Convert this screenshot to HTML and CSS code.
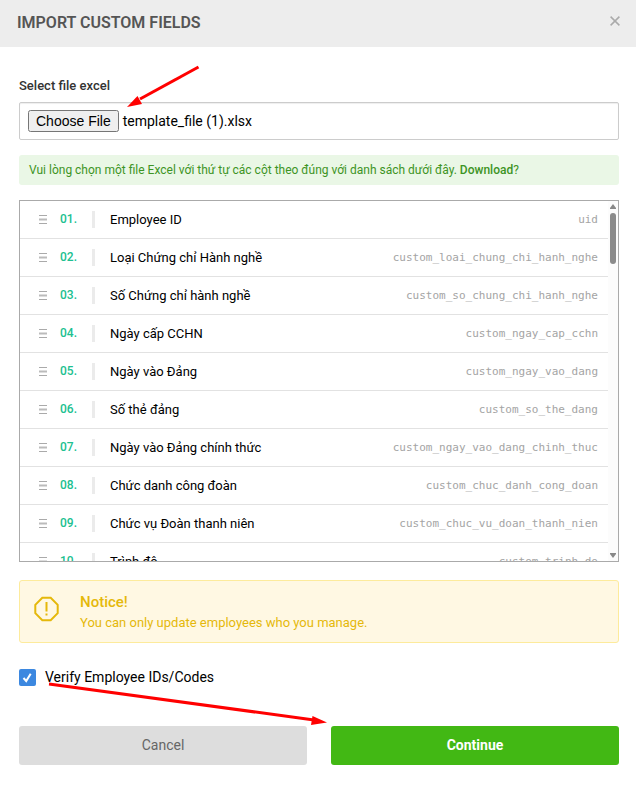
FILE: index.html
```html
<!DOCTYPE html>
<html lang="en">
<head>
<meta charset="utf-8">
<title>Import custom fields</title>
<link rel="stylesheet" href="styles.css">
</head>
<body>
<main class="dialog">
  <header class="dialog-header">
    <h1>IMPORT CUSTOM FIELDS</h1>
    <button class="close" type="button" aria-label="Close">
      <svg width="10" height="10" viewBox="0 0 10 10"><path d="M.6.6l8.8 8.8M9.4.6L.6 9.4"/></svg>
    </button>
  </header>
  <form class="dialog-body">
    <label class="field-label" for="excel">Select file excel</label>
    <div class="file-box">
      <input type="file" id="excel">
      <svg class="arrow arrow-file" width="76" height="46" viewBox="0 0 76 46"><path class="shaft" d="M72.500 5L14 37"/><path class="head" d="M1 45L11.500 34L16 42Z"/></svg>
    </div>
    <p class="hint">Vui lòng chọn một file Excel với thứ tự các cột theo đúng với danh sách dưới đây. <a href="#download">Download</a>?</p>
    <div class="list-frame">
      <ol class="fields" id="fields"></ol>
      <div class="scrollbar" aria-hidden="true">
        <svg width="6" height="5" viewBox="0 0 6 5"><path d="M3 0L6 4V5H0V4Z"/></svg>
        <span class="thumb"></span>
        <svg width="6" height="5" viewBox="0 0 6 5"><path d="M3 5L6 1V0H0V1Z"/></svg>
      </div>
    </div>
    <section class="notice">
      <svg width="26" height="26" viewBox="0 0 26 26"><path d="M8.300 1.800h8.400L23.700 8.800v8.400L16.700 24.200h-8.400L1.300 17.200v-8.400zM12.500 6v9.500M12.500 17.500v2"/></svg>
      <div>
        <h2>Notice!</h2>
        <p>You can only update employees who you manage.</p>
      </div>
    </section>
    <div class="verify">
      <span class="tick">
        <input type="checkbox" id="verify" checked>
        <svg viewBox="0 0 17 17"><path d="M4.500 9l2.700 3L11.700 4.700"/></svg>
      </span>
      <label for="verify">Verify Employee IDs/Codes</label>
      <svg class="arrow arrow-continue" width="284" height="46" viewBox="0 0 284 46"><path class="shaft" d="M3 3L268 39"/><path class="head" d="M281 41.500L265 44L266.500 35Z"/></svg>
    </div>
    <div class="actions">
      <button class="cancel" type="button">Cancel</button>
      <button class="continue" type="submit">Continue</button>
    </div>
  </form>
</main>
<script src="script.js"></script>
</body>
</html>
```
FILE: styles.css
```css
* { box-sizing: border-box; }
body {
  margin: 0;
  background: #fff;
  color: #000;
  font: 13px/20px Roboto, "Noto Sans", sans-serif;
}
h1, h2, p, ol { margin: 0; padding: 0; }
.dialog-header {
  display: flex;
  align-items: center;
  justify-content: space-between;
  height: 47px;
  padding: 0 16px 2px 17px;
  background: #ededed;
}
h1 { color: #555; font-size: 16px; font-weight: 600; }
.close { display: flex; margin-bottom: 3px; padding: 0; border: 0; background: none; }
.close path { fill: none; stroke: #aaa; stroke-width: 1.5; }
.dialog-body { padding: 29px 17px 27px 19px; }
.field-label {
  display: block;
  margin-bottom: 6px;
  color: #333;
  font-weight: 500;
}
.file-box {
  position: relative;
  height: 38px;
  padding: 7px 8px;
  border: 1px solid #ccc;
  border-radius: 2px;
  box-shadow: inset 0 1px 1px #eee;
}
.file-box input { display: block; width: 100%; font: 14px/20px Roboto, sans-serif; }
.file-box input::file-selector-button { font: 14px/16px "Liberation Sans", Arial, sans-serif; }
.arrow { position: absolute; pointer-events: none; }
.arrow .shaft { fill: none; stroke: red; stroke-width: 3; }
.arrow .head { fill: red; }
.arrow-file { left: 106px; top: -41px; }
.hint {
  margin-top: 15px;
  padding: 5px 10px;
  border-radius: 3px;
  background: #eaf7e6;
  color: #3d9424;
  font-size: 12px;
}
.hint a { color: inherit; font-weight: 500; text-decoration: none; }
.list-frame {
  display: flex;
  height: 362px;
  margin-top: 15px;
  border: 1px solid #aaa;
}
.fields {
  flex: 1;
  overflow-y: auto;
  scrollbar-width: none;
  list-style: none;
}
.fields li {
  display: flex;
  align-items: center;
  height: 38px;
  padding: 0 10px 0 19px;
  border-bottom: 1px solid #e2e2e2;
}
.grip { width: 21px; height: 9px; }
.grip path { fill: none; stroke: #aaa; }
.grip .middle { stroke: #bbb; stroke-width: 2; }
.number {
  width: 32px;
  padding-bottom: 2px;
  color: #20bf90;
  font-size: 12px;
  font-weight: 500;
}
.divider { width: 3px; height: 17px; margin-right: 15px; background: #ebebeb; }
.name { flex: 1; }
.fields code { color: #a4a4a4; font: 11px/20px "DejaVu Sans Mono", monospace; }
.scrollbar {
  display: flex;
  flex-direction: column;
  align-items: center;
  width: 10px;
  padding: 3px 0;
  background: #fcfcfc;
}
.scrollbar svg { fill: #888; }
.thumb {
  width: 6px;
  height: 51px;
  margin: 4px 0 auto;
  border-radius: 3px;
  background: #8b8b8b;
}
.notice {
  display: flex;
  gap: 20px;
  margin-top: 18px;
  padding: 11px 14px 9px;
  border: 1px solid #fdeb9c;
  border-radius: 3px;
  background: #fff8e3;
  color: #e5b80b;
}
.notice svg { margin-top: 4px; fill: none; stroke: #e5b80b; stroke-width: 2; }
h2 { font-size: 15px; line-height: 21px; font-weight: 500; }
.verify {
  position: relative;
  display: flex;
  align-items: center;
  gap: 9px;
  margin-top: 24px;
  font-size: 14px;
}
.tick { display: grid; width: 17px; height: 17px; }
.tick > * { grid-area: 1 / 1; }
.tick input { width: 17px; height: 17px; margin: 0; appearance: none; border-radius: 2px; background: #ccc; }
.tick input:checked { background: #3c88e0; }
.tick svg { z-index: 1; fill: none; stroke: #fff; stroke-width: 2; pointer-events: none; }
.tick input:not(:checked) + svg { visibility: hidden; }
.arrow-continue { left: 27px; top: 14px; }
.actions { display: flex; gap: 24px; margin-top: 39px; }
.actions button {
  flex: 1;
  height: 39px;
  padding: 0 0 1px;
  border: 0;
  border-radius: 3px;
  font: 14px/20px Roboto, sans-serif;
}
.actions .cancel { background: #ddd; color: #666; }
.actions .continue { background: #42b814; color: #fff; font-weight: 700; }
```
FILE: script.js
```js
const fields = [
  ["Employee ID", "uid"],
  ["Loại Chứng chỉ Hành nghề", "custom_loai_chung_chi_hanh_nghe"],
  ["Số Chứng chỉ hành nghề", "custom_so_chung_chi_hanh_nghe"],
  ["Ngày cấp CCHN", "custom_ngay_cap_cchn"],
  ["Ngày vào Đảng", "custom_ngay_vao_dang"],
  ["Số thẻ đảng", "custom_so_the_dang"],
  ["Ngày vào Đảng chính thức", "custom_ngay_vao_dang_chinh_thuc"],
  ["Chức danh công đoàn", "custom_chuc_danh_cong_doan"],
  ["Chức vụ Đoàn thanh niên", "custom_chuc_vu_doan_thanh_nien"],
  ["Trình độ", "custom_trinh_do"]
];
document.getElementById("fields").innerHTML = fields.map(([name, key], i) => `
  <li>
    <svg class="grip" viewBox="0 0 21 9"><path d="M0 .5h8M0 8.500h8"/><path class="middle" d="M0 4.500h8"/></svg>
    <span class="number">${String(i + 1).padStart(2, "0")}.</span>
    <span class="divider"></span>
    <span class="name">${name}</span>
    <code>${key}</code>
  </li>`).join("");

const chosen = new DataTransfer();
chosen.items.add(new File([""], "template_file (1).xlsx"));
document.getElementById("excel").files = chosen.files;
```
